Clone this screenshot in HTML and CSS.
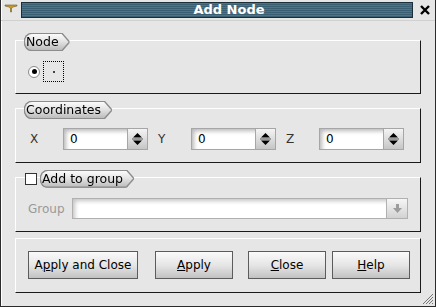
FILE: index.html
```html
<!DOCTYPE html>
<html lang="en">
<head>
    <meta charset="UTF-8">
    <title>Add Node</title>
    <link rel="stylesheet" href="styles.css">
</head>
<body>

<div class="window">
    <div class="titlebar">
        <div class="wm-icon">
            <svg width="14" height="10" viewBox="0 0 14 10">
                <path d="M1 2 L13 2 L13 3 L9 4 L7.5 5 L7.5 9 L6.5 9 L6.5 5 L5 4 L1 3 Z" fill="#c89a2c" stroke="#7a5a14" stroke-width="0.6"/>
            </svg>
        </div>
        <div class="title">Add Node</div>
        <div class="close-x">
            <svg width="12" height="12" viewBox="0 0 12 12">
                <path d="M2 2 L10 10 M10 2 L2 10" stroke="#000" stroke-width="2.4"/>
            </svg>
        </div>
    </div>

    <div class="content">
        <div class="group group-node">
            <div class="tab"><span class="tab-shape">Node</span></div>
            <div class="node-row">
                <span class="radio"><span class="radio-dot"></span></span>
                <span class="focus-box"><span class="tiny-dot"></span></span>
            </div>
        </div>

        <div class="group">
            <div class="tab"><span class="tab-shape">Coordinates</span></div>
            <div class="coord-row">
                <span class="coord-label">X</span>
                <div class="spin"><span class="spin-field">0</span><span class="spin-btn"><svg width="11" height="14" viewBox="0 0 11 14"><path d="M5.5 1 L10 5.5 L1 5.5 Z M1 8.5 L10 8.5 L5.5 13 Z" fill="#000"/><path d="M0 7 L11 7" stroke="#555" stroke-width="1"/></svg></span></div>
                <span class="coord-label">Y</span>
                <div class="spin"><span class="spin-field">0</span><span class="spin-btn"><svg width="11" height="14" viewBox="0 0 11 14"><path d="M5.5 1 L10 5.5 L1 5.5 Z M1 8.5 L10 8.5 L5.5 13 Z" fill="#000"/><path d="M0 7 L11 7" stroke="#555" stroke-width="1"/></svg></span></div>
                <span class="coord-label">Z</span>
                <div class="spin"><span class="spin-field">0</span><span class="spin-btn"><svg width="11" height="14" viewBox="0 0 11 14"><path d="M5.5 1 L10 5.5 L1 5.5 Z M1 8.5 L10 8.5 L5.5 13 Z" fill="#000"/><path d="M0 7 L11 7" stroke="#555" stroke-width="1"/></svg></span></div>
            </div>
        </div>

        <div class="group">
            <div class="tab-check">
                <span class="checkbox"></span>
                <div class="tab tab-inline"><span class="tab-shape">Add to group</span></div>
            </div>
            <div class="group-row">
                <span class="group-label">Group</span>
                <div class="combo">
                    <span class="combo-field"></span>
                    <span class="combo-btn"><svg width="11" height="11" viewBox="0 0 11 11"><path d="M4 1 L7 1 L7 5 L10 5 L5.5 10 L1 5 L4 5 Z" fill="#9c9c9c"/></svg></span>
                </div>
            </div>
        </div>

        <div class="group group-buttons">
            <div class="button-row">
                <button class="btn btn-wide">A<u>p</u>ply and Close</button>
                <button class="btn btn-apply"><u>A</u>pply</button>
                <button class="btn btn-close"><u>C</u>lose</button>
                <button class="btn btn-help"><u>H</u>elp</button>
            </div>
        </div>
    </div>

    <svg class="grip" width="13" height="13" viewBox="0 0 13 13">
        <path d="M12 2 L2 12 M12 5 L5 12 M12 8 L8 12 M12 11 L11 12" stroke="#777" stroke-width="1"/>
    </svg>
</div>

</body>
</html>
```

FILE: styles.css
```css
body {
    margin: 0;
    font-family: 'DejaVu Sans', sans-serif;
    font-size: 12px;
    color: #000;
    background-color: #e6e6e6;
}

.window {
    position: relative;
    width: 436px;
    height: 307px;
    box-sizing: border-box;
    background-color: #e6e6e6;
    border: 1px solid #2b2b2b;
    border-top: none;
    box-shadow: inset 1px 0 0 #fff;
}

.titlebar {
    display: flex;
    height: 21px;
    border-bottom: 1px solid #d0d0d0;
    box-sizing: border-box;
}

.wm-icon {
    width: 20px;
    display: flex;
    justify-content: center;
    padding-top: 3px;
}

.title {
    flex: 1;
    margin: 2px 0 2px 0;
    background: repeating-linear-gradient(#48768f 0 1px, #3a5f73 1px 2px);
    border: 1px solid #1c2e38;
    color: #fff;
    font-weight: bold;
    font-size: 13px;
    line-height: 14px;
    text-align: center;
    padding-left: 24px;
}

.close-x {
    width: 21px;
    display: flex;
    justify-content: center;
    align-items: center;
    padding-left: 1px;
}

.content {
    padding: 19px 14px 0 14px;
}

/* etched group boxes */
.group {
    position: relative;
    height: 55px;
    box-sizing: border-box;
    border-top: 1px solid #fff;
    border-left: 1px solid #fff;
    border-right: 1px solid #1a1a1a;
    border-bottom: 1px solid #1a1a1a;
    margin-bottom: 14px;
}

.group-node {
    height: 54px;
}

.group:nth-child(3) {
    margin-bottom: 6px;
}

.tab {
    position: absolute;
    top: -7px;
    left: 9px;
    filter: drop-shadow(1px 0 0 #8c8c8c) drop-shadow(-1px 0 0 #8c8c8c) drop-shadow(0 1px 0 #8c8c8c) drop-shadow(0 -1px 0 #8c8c8c);
}

.tab-shape {
    display: block;
    height: 16px;
    line-height: 16px;
    padding: 0 10px 0 1px;
    font-size: 12.5px;
    background: linear-gradient(#fbfbfb, #e4e4e4 45%, #bcbcbc);
    border-radius: 7px 0 0 7px / 8px 0 0 8px;
    clip-path: polygon(0 0, calc(100% - 7px) 0, 100% 50%, calc(100% - 7px) 100%, 0 100%);
}

.tab-check {
    position: absolute;
    top: -8px;
    left: 9px;
    height: 17px;
    display: flex;
    align-items: center;
}

.tab-inline {
    position: relative;
    top: 0;
    left: 0;
    margin-left: 4px;
}

.checkbox {
    width: 10px;
    height: 10px;
    background-color: #fff;
    border: 1px solid #333;
}

/* node row */
.node-row {
    display: flex;
    align-items: center;
    padding: 20px 0 0 12px;
}

.radio {
    width: 10px;
    height: 10px;
    border-radius: 50%;
    background-color: #fff;
    border: 1px solid #8a8a8a;
    display: flex;
    justify-content: center;
    align-items: center;
}

.radio-dot {
    width: 5px;
    height: 5px;
    border-radius: 50%;
    background-color: #000;
}

.focus-box {
    width: 19px;
    height: 19px;
    margin-left: 3px;
    border: 1px dotted #000;
    position: relative;
}

.tiny-dot {
    position: absolute;
    left: 9px;
    top: 9px;
    width: 2px;
    height: 2px;
    background-color: #444;
}

/* coordinates */
.coord-row {
    display: flex;
    align-items: center;
    padding: 19px 0 0 14px;
}

.coord-label {
    width: 33px;
    color: #333;
}

.coord-label + .spin + .coord-label {
    margin-left: 10px;
}

.spin {
    display: flex;
    width: 85px;
    height: 22px;
    box-sizing: border-box;
    border: 1px solid #a6a6a6;
}

.spin-field {
    flex: 1;
    background: #fff;
    box-shadow: inset 3px 3px 4px -1px #b8b8b8;
    padding-left: 6px;
    line-height: 20px;
}

.spin-btn {
    width: 19px;
    border-left: 1px solid #a6a6a6;
    background: linear-gradient(#f4f4f4, #c6c6c6);
    display: flex;
    justify-content: center;
    align-items: center;
}

/* group row */
.group-row {
    display: flex;
    align-items: center;
    padding: 20px 0 0 12px;
}

.group-label {
    width: 44px;
    color: #999;
}

.combo {
    display: flex;
    width: 336px;
    height: 21px;
    box-sizing: border-box;
    border: 1px solid #b0b0b0;
}

.combo-field {
    flex: 1;
    background: #fff;
    box-shadow: inset 3px 3px 4px -1px #c4c4c4;
}

.combo-btn {
    width: 20px;
    border-left: 1px solid #b0b0b0;
    background: linear-gradient(#f6f6f6, #d2d2d2);
    display: flex;
    justify-content: center;
    align-items: center;
}

/* buttons */
.group-buttons {
    margin-bottom: 0;
}

.button-row {
    display: flex;
    padding: 12px 0 0 12px;
}

.btn {
    height: 28px;
    box-sizing: border-box;
    font-family: 'DejaVu Sans', sans-serif;
    font-size: 12px;
    color: #000;
    background: linear-gradient(#fafafa, #e6e6e6 50%, #c2c2c2);
    border: 1px solid #5c5c5c;
    padding: 0;
    margin: 0;
}

.btn-wide {
    width: 110px;
}

.btn-apply {
    width: 78px;
    margin-left: 17px;
}

.btn-close {
    width: 78px;
    margin-left: 15px;
}

.btn-help {
    width: 78px;
    margin-left: 6px;
}

.grip {
    position: absolute;
    right: 1px;
    bottom: 1px;
}
```
